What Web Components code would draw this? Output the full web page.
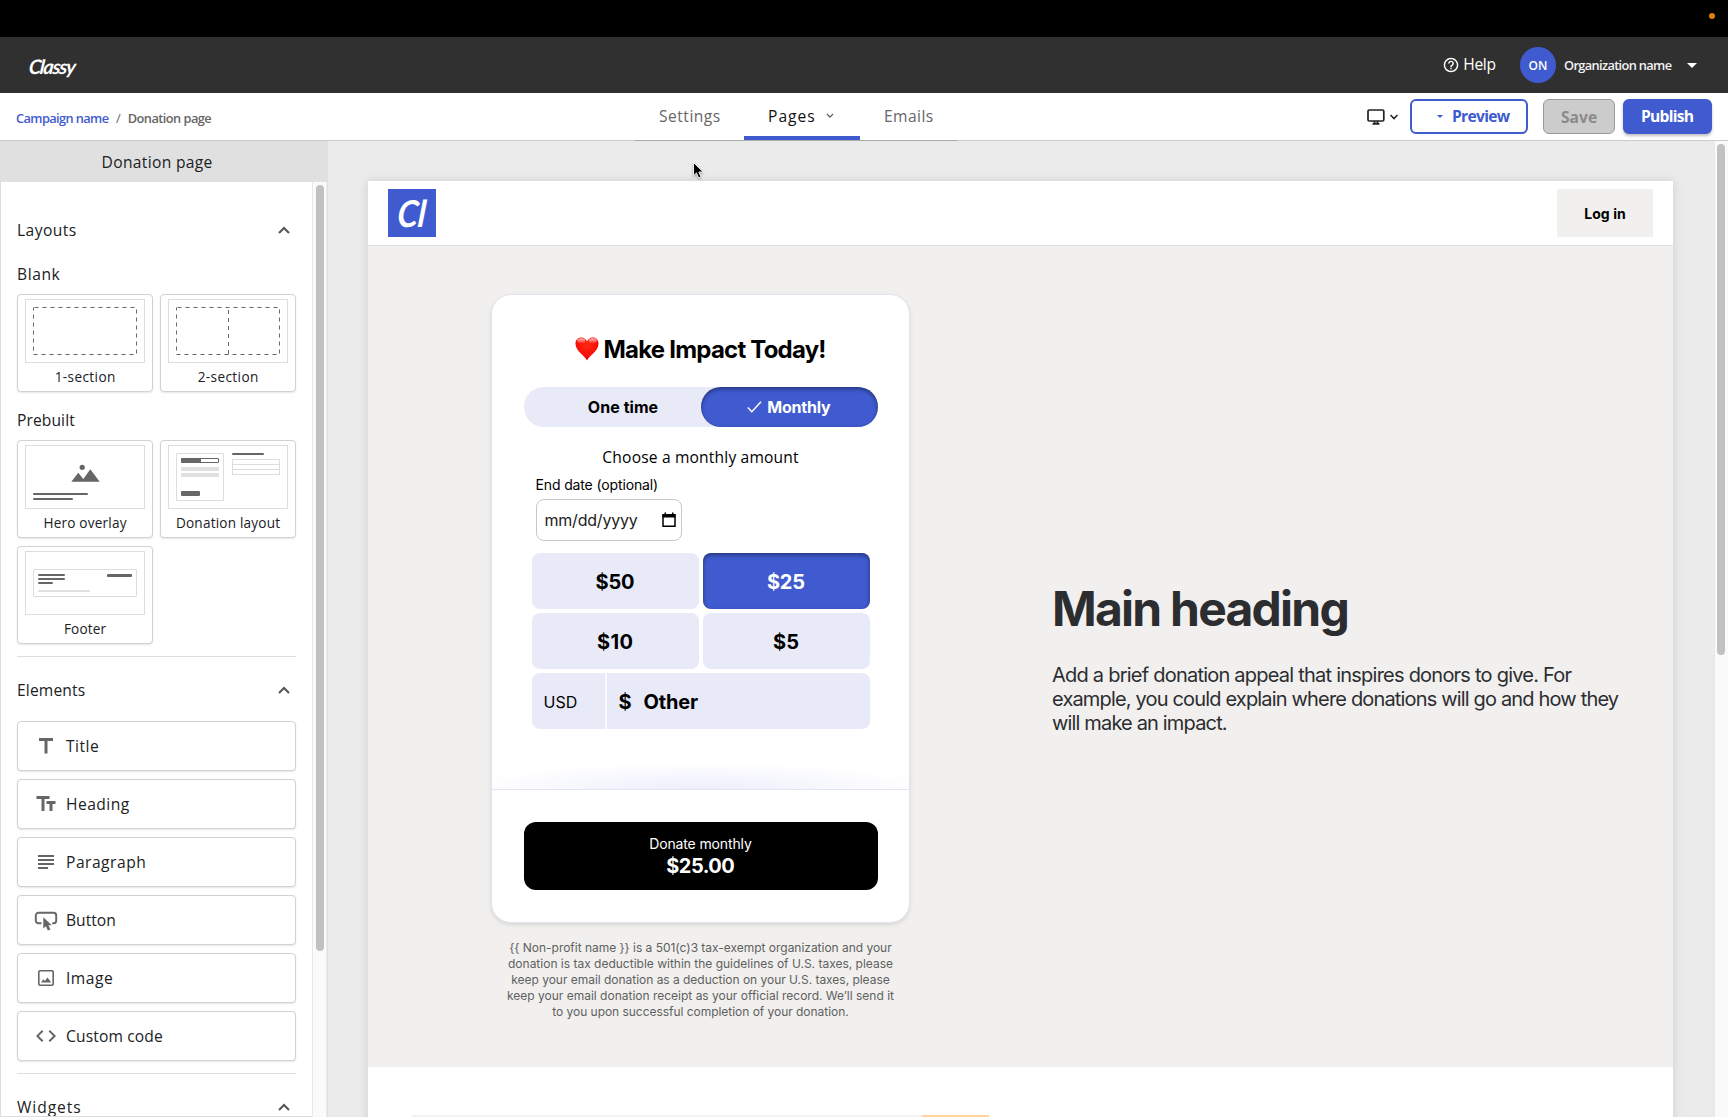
<!DOCTYPE html>
<html lang="en">
<head>
<meta charset="utf-8">
<title>Donation page – Campaign editor</title>
<style>
html,body{margin:0;height:100%;overflow:hidden;background:#ebebeb}
body{font-family:"Open Sans",Lato,sans-serif;color:#222;-webkit-font-smoothing:antialiased}
</style>
</head>
<body>
<campaign-editor></campaign-editor>
<script>
function define(name, css, html) {
  const tpl = document.createElement('template');
  tpl.innerHTML = '<style>*{box-sizing:border-box}' + css + '</style>' + html;
  customElements.define(name, class extends HTMLElement {
    constructor() {
      super();
      this.attachShadow({ mode: 'open' }).appendChild(tpl.content.cloneNode(true));
    }
  });
}

const thumbs = {
  one: '<rect x="8.5" y="8.5" width="103" height="47" fill="none" stroke="#666" stroke-dasharray="4 4" stroke-dashoffset="-1"/>',
  two: '<rect x="8.5" y="8.5" width="103" height="47" fill="none" stroke="#666" stroke-dasharray="4 4" stroke-dashoffset="-1"/><path d="M60.5 11v44" stroke="#666" stroke-dasharray="4 4"/>',
  hero: '<g fill="#666"><circle cx="57.2" cy="22.3" r="2.6"/><path d="M46.3 36.7l7-9 5 6.3 7-9.8 9.4 12.5z"/><rect x="8" y="48" width="55" height="2" rx="1"/><rect x="8" y="53" width="40" height="2" rx="1"/></g>',
  donation: '<g fill="none" stroke="#ddd"><rect x="8.5" y="8.5" width="47" height="47" rx=".5"/><rect x="64.5" y="14.5" width="47" height="15"/><path d="M64 19.5h48M64 24.5h48"/></g><g fill="#666"><rect x="13" y="13" width="20" height="5" rx="1"/><rect x="13" y="46" width="19" height="5" rx="1"/><rect x="64" y="8" width="32" height="2" rx="1"/></g><rect x="13.5" y="13.5" width="37" height="4" rx=".5" fill="none" stroke="#666"/><g fill="#e0e0e0"><rect x="13" y="22" width="38" height="4" rx="1"/><rect x="13" y="28" width="38" height="4" rx="1"/></g>',
  footer: '<rect x="8.5" y="18.5" width="103" height="27" rx=".5" fill="none" stroke="#ddd"/><g fill="#666"><rect x="13" y="23" width="27" height="2" rx="1"/><rect x="13" y="27" width="27" height="2" rx="1"/><rect x="13" y="31" width="15" height="2" rx="1"/><rect x="82" y="23" width="25" height="3" rx="1"/></g><rect x="13" y="39" width="52" height="2" rx="1" fill="#e0e0e0"/>'
};
customElements.define('layout-tile', class extends HTMLElement {
  constructor() {
    super();
    this.attachShadow({ mode: 'open' });
  }
  connectedCallback() {
    this.shadowRoot.innerHTML = `<style>
      :host{box-sizing:border-box;display:flex;flex-direction:column;align-items:center;width:136px;height:98px;padding-top:4px;border:1px solid #d2d2d2;border-radius:4px;background:#fff;box-shadow:0 1px 2px rgba(0,0,0,.1)}
      .label{height:28px;line-height:28px;font-size:13.6px}
      svg{display:block}
    </style>
    <svg width="120" height="64"><rect x=".5" y=".5" width="119" height="63" fill="#fff" stroke="#ddd"/>${thumbs[this.getAttribute('kind')]}</svg>
    <div class="label"><slot></slot></div>`;
  }
});

const icons = {
  title: '<path d="M5 4v3h5.5v12.5h3V7H19V4z"/>',
  heading: '<path d="M2.5 4v3h5v12h3V7h5V4h-13zm19 5h-9v3h3v7h3v-7h3V9z"/>',
  paragraph: '<path d="M14 17H4v2h10v-2zm6-8H4v2h16V9zM4 15h16v-2H4v2zM4 5v2h16V5H4z"/>',
  button: '<path d="M7.5 15.3H4.4a2.6 2.6 0 0 1-2.6-2.6V7.4a2.6 2.6 0 0 1 2.6-2.6h15.2a2.6 2.6 0 0 1 2.6 2.6v5.3a2.6 2.6 0 0 1-2.6 2.6h-1.4" fill="none" stroke="#666" stroke-width="1.9"/><path d="M9.300 9.2v11.3l2.6-2.2 2 4.3 2.5-1.2-2-4.1h3.4z"/>',
  image: '<rect x="4.8" y="4.8" width="14.4" height="14.4" rx="1.2" fill="none" stroke="#666" stroke-width="1.6"/><path d="M7 16.500l2.300-3.200 1.500 1.600 2.700-3.400 3.700 5z"/>',
  code: '<path d="M9.4 16.6L4.8 12l4.6-4.6L8 6l-6 6 6 6 1.4-1.400zm5.200 0l4.600-4.600-4.600-4.600L16 6l6 6-6 6-1.400-1.400z"/>'
};
customElements.define('element-item', class extends HTMLElement {
  constructor() {
    super();
    this.attachShadow({ mode: 'open' });
  }
  connectedCallback() {
    this.shadowRoot.innerHTML = `<style>
      :host{box-sizing:border-box;display:flex;align-items:center;gap:8px;height:50px;padding-left:16px;border:1px solid #d2d2d2;border-radius:4px;background:#fff;box-shadow:0 1px 2px rgba(0,0,0,.1);font-size:15.6px}
    </style>
    <svg width="24" height="24" fill="#666">${icons[this.getAttribute('kind')]}</svg><slot></slot>`;
  }
});

define('panel-heading', `
  :host{box-sizing:border-box;display:flex;justify-content:space-between;align-items:center;height:40px;padding-right:6px;font-size:15.6px;line-height:38px}
  svg{display:block}
`, `<div><slot></slot></div><svg width="12" height="8" fill="none" stroke="#555" stroke-width="2"><path d="M1 7l5-5 5 5"/></svg>`);

define('side-panel', `
  :host{display:flex;flex-direction:column;width:328px;min-height:0;color:#202124}
  .head{flex:none;height:41px;padding-right:14px;background:#e0e0e0;display:flex;align-items:center;justify-content:center;font-size:15.6px}
  .body{flex:1;display:flex;min-height:0;border-left:1px solid #ddd;border-right:1px solid #e0e0e0;background:#fff}
  .list{flex:1;overflow:hidden;padding:28px 16px 0 16px;border-bottom:1px solid #ddd}
  .track{flex:none;width:15px;background:#fafafa;border-left:1px solid #e8e8e8;border-right:1px solid #ececec;padding:3px 0 0 3px}
  .thumb{width:8px;height:766px;border-radius:4px;background:#c1c1c1}
  .sub{height:40px;line-height:40px;font-size:15.6px}
  .grid{display:grid;grid-template-columns:136px 136px;gap:8px 7px}
  .rule{height:1px;background:#ddd;margin:12px 0 13px}
  .stack{display:flex;flex-direction:column;gap:8px;margin-top:11px}
`, `
  <div class="head"><fit-text w="109.5">Donation page</fit-text></div>
  <div class="body">
    <div class="list">
      <panel-heading><fit-text w="58">Layouts</fit-text></panel-heading>
      <div class="sub" style="margin-top:4px"><fit-text w="41.5">Blank</fit-text></div>
      <div class="grid">
        <layout-tile kind="one"><fit-text w="59.5">1-section</fit-text></layout-tile>
        <layout-tile kind="two"><fit-text w="59.5">2-section</fit-text></layout-tile>
      </div>
      <div class="sub" style="margin-top:8px"><fit-text w="56.5">Prebuilt</fit-text></div>
      <div class="grid">
        <layout-tile kind="hero"><fit-text w="82">Hero overlay</fit-text></layout-tile>
        <layout-tile kind="donation"><fit-text w="103">Donation layout</fit-text></layout-tile>
        <layout-tile kind="footer"><fit-text w="41">Footer</fit-text></layout-tile>
      </div>
      <div class="rule"></div>
      <panel-heading><fit-text w="67">Elements</fit-text></panel-heading>
      <div class="stack">
        <element-item kind="title"><fit-text w="31.5">Title</fit-text></element-item>
        <element-item kind="heading"><fit-text w="62">Heading</fit-text></element-item>
        <element-item kind="paragraph"><fit-text w="78.5">Paragraph</fit-text></element-item>
        <element-item kind="button"><fit-text w="48.5">Button</fit-text></element-item>
        <element-item kind="image"><fit-text w="45.5">Image</fit-text></element-item>
        <element-item kind="code"><fit-text w="95.5">Custom code</fit-text></element-item>
      </div>
      <div class="rule"></div>
      <panel-heading><fit-text w="62.5">Widgets</fit-text></panel-heading>
    </div>
    <div class="track"><div class="thumb"></div></div>
  </div>
`);

define('app-topbar', `
  :host{display:flex;align-items:center;justify-content:space-between;height:56px;padding:0 31px 0 28px;background:#303030;color:#fff}
  .brand{font:italic 700 20px/24px Lato,sans-serif;transform:translateY(1px) skewX(-6deg);padding-left:1px}
  .right{display:flex;align-items:center}
  .help{display:flex;align-items:center;gap:4px;font-size:15.6px;font-weight:500;line-height:54px}
  .help div{height:56px}
  .avatar{width:36px;height:36px;margin:0 8px 0 24px;border-radius:50%;background:#3f5bcf;display:flex;align-items:center;justify-content:center;font-size:12px;font-weight:600}
  .org{font-size:12.8px;font-weight:600;color:#f2f2f2}
  .caret{margin-left:15px}
`, `
  <div class="brand"><fit-text w="48">Classy</fit-text></div>
  <div class="right">
    <div class="help"><svg width="16" height="16" viewBox="1 1 22 22" fill="#fff"><path d="M11 18h2v-2h-2v2zm1-16C6.480 2 2 6.480 2 12s4.480 10 10 10 10-4.480 10-10S17.520 2 12 2zm0 18c-4.410 0-8-3.590-8-8s3.590-8 8-8 8 3.590 8 8-3.590 8-8 8zm0-14c-2.210 0-4 1.790-4 4h2c0-1.100.9-2 2-2s2 .9 2 2c0 2-3 1.750-3 5h2c0-2.250 3-2.500 3-5 0-2.210-1.790-4-4-4z"/></svg><div><fit-text w="31.5">Help</fit-text></div></div>
    <div class="avatar"><fit-text w="18">ON</fit-text></div>
    <div class="org"><fit-text w="107">Organization name</fit-text></div>
    <svg class="caret" width="10" height="5"><path d="M0 0h10L5 5z" fill="#fff"/></svg>
  </div>
`);

define('tool-button', `
  :host{box-sizing:border-box;display:flex;align-items:center;justify-content:center;height:35px;padding-bottom:1px;border:2px solid #3f5bcf;border-radius:6px;font-size:15.6px;font-weight:700;color:#3f5bcf;background:#fff}
  :host([kind=primary]){background:#3f5bcf;color:#fff;box-shadow:0 2px 3px rgba(0,0,0,.25)}
  :host([kind=disabled]){background:#ccc;color:#8a8a8a;border:1.5px solid #9a9a9a;padding-bottom:0}
`, `<slot></slot>`);

define('app-toolbar', `
  :host{box-sizing:border-box;display:grid;grid-template-columns:635px 322px 1fr;height:48px;background:#fff;border-bottom:1px solid #ccc}
  .crumbs{display:flex;align-items:center;padding:2px 0 0 16px;font-size:12.8px;font-weight:600;color:#666}
  .crumbs a{color:#3f5bcf;display:flex}
  .sep{font-weight:400;margin:0 7px}
  .tabs{display:flex;height:48px;border-bottom:1px solid #aaa;color:#666;font-size:15.6px}
  .tab{display:flex;padding:0 0 0 24px;line-height:47px}
  .tab.on{color:#111;align-items:center;border-bottom:4px solid #3f5bcf;padding-top:3px}
  .actions{display:flex;align-items:center;padding:0 16px 1px 0;justify-content:flex-end}
`, `
  <div class="crumbs"><a><fit-text w="92">Campaign name</fit-text></a><span class="sep">/</span><fit-text w="83">Donation page</fit-text></div>
  <div class="tabs">
    <div class="tab" style="width:109px"><fit-text w="60">Settings</fit-text></div>
    <div class="tab on" style="width:116px"><fit-text w="45.5">Pages</fit-text><svg width="8" height="6" style="margin-left:11px" fill="none" stroke="#555" stroke-width="1.1"><path d="M1 1l3 3.2 3-3.2"/></svg></div>
    <div class="tab"><fit-text w="48">Emails</fit-text></div>
  </div>
  <div class="actions">
    <svg width="18" height="16" fill="none" stroke="#222" stroke-width="1.7"><rect x="1" y="1" width="15.8" height="11" rx="1.2"/><path d="M7.500 12v2.600h3V12M5.500 14.900h7"/></svg>
    <svg width="8" height="6" style="margin:0 12px 0 5px" fill="none" stroke="#222" stroke-width="1.5"><path d="M.5 1L4 4.600 7.500 1"/></svg>
    <tool-button style="width:118px;margin-right:15px;padding-left:9px"><svg width="6" height="3" style="margin-right:9px"><path d="M0 0h6L3 3z" fill="#3f5bcf"/></svg><fit-text w="57">Preview</fit-text></tool-button>
    <tool-button kind="disabled" style="width:72px;margin-right:8px"><fit-text w="35">Save</fit-text></tool-button>
    <tool-button kind="primary" style="width:89px"><fit-text w="52">Publish</fit-text></tool-button>
  </div>
`);

define('amount-option', `
  :host{box-sizing:border-box;display:flex;align-items:center;justify-content:center;height:56px;padding-top:1px;border-radius:8px;background:#e8eaf8;font-size:20px;font-weight:700}
  :host([selected]){background:#3f5bcf;color:#fff;box-shadow:inset 0 2px 4px rgba(0,0,0,.42)}
`, `<slot></slot>`);

define('donation-card', `
  :host{box-sizing:border-box;display:flex;flex-direction:column;width:419px;height:629px;border:1px solid #e2e3f0;border-radius:20px;background:#fff;box-shadow:0 2px 4px rgba(0,0,0,.1);font-family:Inter,sans-serif;color:#000;padding-top:38px}
  h2{margin:0 0 22px;height:32px;display:flex;align-items:center;justify-content:center;gap:5px;font-size:24px;font-weight:700}
  .toggle{display:flex;margin:0 31.5px;height:40px;border-radius:20px;background:#e8eaf8;font-size:16px;font-weight:700}
  .toggle div{flex:none;width:50%;display:flex;align-items:center;justify-content:center}
  .toggle .once{padding-left:22px}
  .toggle .on{border-radius:20px;background:#3f5bcf;color:#fff;gap:5px;box-shadow:inset 0 2px 4px rgba(0,0,0,.42)}
  .choose{height:24px;margin-top:18px;text-align:center;font:500 15.6px/24px "Open Sans",Lato,sans-serif}
  label{display:block;height:20px;line-height:20px;margin:6px 0 4px 43.5px;font-size:14px}
  .date{display:flex;align-items:center;justify-content:space-between;width:146px;height:42px;margin-left:43.5px;padding:0 5px 0 8px;border:1px solid #c8c8c8;border-radius:8px;font-size:16px;color:#222}
  .grid{display:grid;grid-template-columns:1fr 1fr;gap:4px;margin:12px 39.5px 0}
  .other{grid-column:1/3;display:flex;height:56px;border-radius:8px;background:#e8eaf8;align-items:center;overflow:hidden}
  .cur{align-self:stretch;width:75px;border-right:2px solid #f8f8ff;padding:1px 0 0 12px;display:flex;align-items:center;font-size:16px}
  .val{display:flex;gap:12px;padding:1px 0 0 12px;font-size:20px;font-weight:700}
  .glow{height:26px;margin-top:34px;background:radial-gradient(ellipse 56% 100% at 50% 100%,#eceefb 0,#f7f8fe 55%,#fff 100%)}
  .foot{border-top:1px solid #e3e5f6;padding:32px 31.5px 0}
  .donate{height:68px;padding-top:12px;border-radius:12px;background:#000;color:#fff;display:flex;flex-direction:column;align-items:center;font-size:14px;line-height:20px}
  .donate b{font-size:20px;line-height:24px}
`, `
  <h2><svg width="24" height="24"><defs><radialGradient id="g" cx=".5" cy=".35" r=".7"><stop offset="0" stop-color="#ff2a12"/><stop offset=".7" stop-color="#f80a06"/><stop offset="1" stop-color="#c60000"/></radialGradient><linearGradient id="s" x1="0" y1="0" x2="0" y2="1"><stop offset="0" stop-color="#fff" stop-opacity=".75"/><stop offset="1" stop-color="#fff" stop-opacity="0"/></linearGradient></defs><path d="M12 23.500C9.500 18.500 .5 14 .5 6.800 .5 3 3 .6 6.200 .6 9 .6 11.100 2.300 12 4.600 12.900 2.300 15 .6 17.800 .6 21 .6 23.500 3 23.500 6.800 23.500 14 14.500 18.500 12 23.500z" fill="url(#g)"/><ellipse cx="6.200" cy="4" rx="4" ry="2.700" fill="url(#s)"/><ellipse cx="17.800" cy="4" rx="4" ry="2.700" fill="url(#s)"/></svg><fit-text w="221">Make Impact Today!</fit-text></h2>
  <div class="toggle">
    <div class="once"><fit-text w="69">One time</fit-text></div>
    <div class="on"><svg width="15" height="12" fill="none" stroke="#fff" stroke-width="1.5"><path d="M.8 6.500l4 4.200L14 .8"/></svg><fit-text w="62">Monthly</fit-text></div>
  </div>
  <div class="choose"><fit-text w="195">Choose a monthly amount</fit-text></div>
  <label><fit-text w="121.5">End date (optional)</fit-text></label>
  <div class="date"><fit-text w="92">mm/dd/yyyy</fit-text><svg width="14" height="16"><path d="M1 3h12v11.200H1z" fill="none" stroke="#000" stroke-width="1.5"/><path d="M.5 2h13v3.500H.5zM2.500 .5h1.500V3H2.500zM10 .5h1.500V3H10z"/></svg></div>
  <div class="grid">
    <amount-option><fit-text w="37.5">$50</fit-text></amount-option>
    <amount-option selected><fit-text w="36.5">$25</fit-text></amount-option>
    <amount-option><fit-text w="34.5">$10</fit-text></amount-option>
    <amount-option><fit-text w="24.5">$5</fit-text></amount-option>
    <div class="other"><div class="cur"><fit-text w="32.5">USD</fit-text></div><div class="val"><span>$</span><fit-text w="53">Other</fit-text></div></div>
  </div>
  <div class="glow"></div>
  <div class="foot"><div class="donate"><fit-text w="101.5">Donate monthly</fit-text><b><fit-text w="67">$25.00</fit-text></b></div></div>
`);

define('page-preview', `
  :host{display:block;width:1305px;background:#fff;box-shadow:0 0 10px rgba(0,0,0,.12);font-family:Inter,sans-serif}
  header{display:flex;justify-content:space-between;align-items:center;height:65px;padding:0 20px;border-bottom:1px solid #dedede}
  .mono{width:48px;height:48px;background:#3f5bcf;color:#fff;font:italic 700 37px/47px Lato,sans-serif;text-align:center}
  .mono span{display:block;transform:skewX(-5deg) scaleX(.9)}
  .login{width:96px;height:48px;background:#f1f0ef;display:flex;align-items:center;justify-content:center;font-size:14px;font-weight:700;color:#000}
  section{display:flex;height:821px;background:#f1f0ee;padding:48px 0 0 123px}
  .left{width:419px}
  .legal{margin-top:17px;font-size:12px;line-height:16px;color:#606060;display:flex;flex-direction:column;align-items:center}
  .right{padding:286px 0 0 142px;color:#2c2d30}
  h1{margin:0 0 25px;font-size:48px;line-height:58px;font-weight:700}
  p{margin:0;font-size:20px;line-height:24px;display:flex;flex-direction:column;align-items:flex-start}
  .below{display:flex;height:60px;padding:48px 0 0 44px}
  .below div{width:510px;background:#f2f2f2}
  .below i{width:67px;background:#ffd39b}
`, `
  <header><div class="mono"><span>Cl</span></div><div class="login"><fit-text w="40.5">Log in</fit-text></div></header>
  <section>
    <div class="left">
      <donation-card></donation-card>
      <div class="legal">
        <fit-text w="381.5">{{ Non-profit name }} is a 501(c)3 tax-exempt organization and your</fit-text>
        <fit-text w="384">donation is tax deductible within the guidelines of U.S. taxes, please</fit-text>
        <fit-text w="377.5">keep your email donation as a deduction on your U.S. taxes, please</fit-text>
        <fit-text w="386">keep your email donation receipt as your official record. We’ll send it</fit-text>
        <fit-text w="295.5">to you upon successful completion of your donation.</fit-text>
      </div>
    </div>
    <div class="right">
      <h1><fit-text w="294">Main heading</fit-text></h1>
      <p>
        <fit-text w="518.5">Add a brief donation appeal that inspires donors to give. For</fit-text>
        <fit-text w="565.5">example, you could explain where donations will go and how they</fit-text>
        <fit-text w="174">will make an impact.</fit-text>
      </p>
    </div>
  </section>
  <div class="below"><div></div><i></i></div>
`);

define('campaign-editor', `
  :host{display:flex;flex-direction:column;width:1728px;height:1117px;overflow:hidden;position:relative}
  .system{flex:none;height:37px;background:#000;display:flex;justify-content:flex-end;padding:13px 13px 0 0}
  .system i{width:6px;height:6px;border-radius:50%;background:#d9820a}
  app-topbar,app-toolbar{flex:none}
  .work{flex:1;display:flex;min-height:0}
  side-panel{flex:none}
  .canvas{flex:1;overflow:hidden;padding:40px 0 0 40px;background:#ebebeb}
  .track{width:14px;background:#fafafa;border-left:1px solid #e8e8e8;padding:3px 0 0 2px}
  .thumb{width:8px;height:511px;border-radius:4px;background:#c1c1c1}
  .cursor{position:absolute;left:692px;top:161px;filter:drop-shadow(0 1px 1px rgba(0,0,0,.35))}
`, `
  <div class="system"><i></i></div>
  <app-topbar></app-topbar>
  <app-toolbar></app-toolbar>
  <div class="work">
    <side-panel></side-panel>
    <div class="canvas"><page-preview></page-preview></div>
    <div class="track"><div class="thumb"></div></div>
  </div>
  <svg class="cursor" width="14" height="19"><path d="M1.500 1.500v13.200l3-2.800 2.100 5 2.400-1-2.100-4.900h4.300z" fill="#000" stroke="#fff" stroke-width=".9"/></svg>
`);

/* One-line text whose tracking is set so that its ink spans the width in "w". */
customElements.define('fit-text', class extends HTMLElement {
  constructor() {
    super();
    this.attachShadow({ mode: 'open' }).innerHTML = '<style>:host{display:inline-block;white-space:pre}</style><slot></slot>';
  }
  connectedCallback() {
    const size = parseFloat(getComputedStyle(this).fontSize);
    const target = parseFloat(this.getAttribute('w')) + size * 0.08;
    const gaps = this.textContent.length - 1;
    const spacing = (target - this.getBoundingClientRect().width) / gaps;
    this.style.letterSpacing = spacing.toFixed(3) + 'px';
    this.style.marginRight = (-spacing).toFixed(3) + 'px';
  }
});
</script>
</body>
</html>
